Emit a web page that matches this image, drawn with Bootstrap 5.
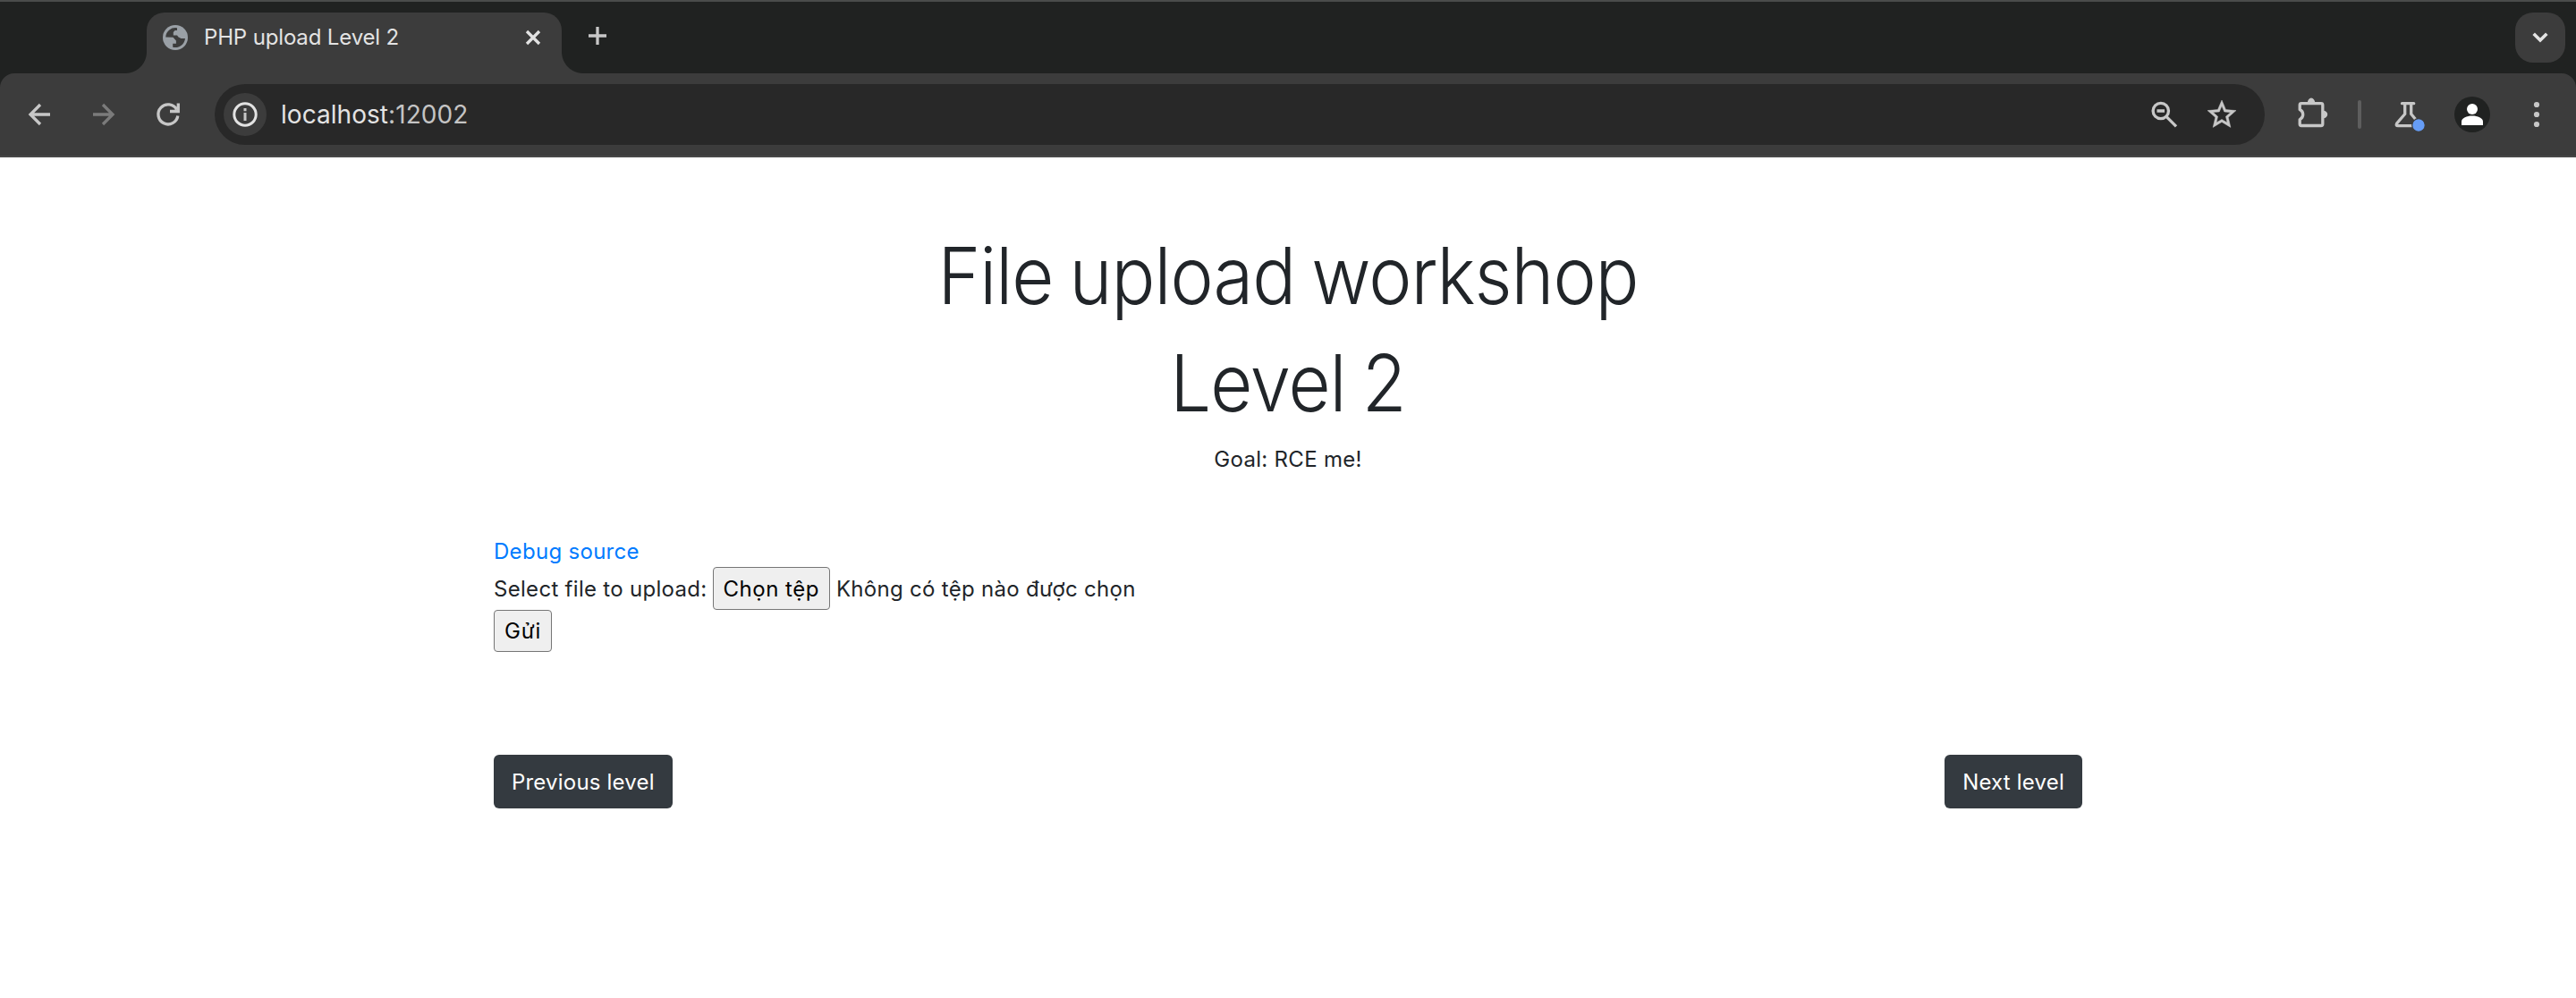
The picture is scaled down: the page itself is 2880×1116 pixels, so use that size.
<!DOCTYPE html>
<html lang="vi">
<head>
<meta charset="utf-8">
<meta name="viewport" content="width=device-width, initial-scale=1">
<title>PHP upload Level 2</title>
<link rel="stylesheet" href="https://cdn.jsdelivr.net/npm/bootstrap@5.3.0/dist/css/bootstrap.min.css">
<style>
body{font-family:Inter,"Liberation Sans",sans-serif;font-size:24px;line-height:36px;letter-spacing:.3px;color:#212529;background:#fff}
svg{display:block;flex:none;fill:none;stroke:#c7c7c7;stroke-width:3.3}
.tabstrip{height:102px;margin-bottom:-20px;padding:12px 12px 0 164px;background:#202221;border-top:2px solid #4a4c4b;letter-spacing:-.15px}
.tab-item{position:relative;width:464px;height:68px;padding:0 20px 12px 14px;background:#3c3c3c;border-radius:20px 20px 0 0;color:#e3e3e3}
.tab-item::before,.tab-item::after{content:"";position:absolute;bottom:0;width:24px;height:24px}
.tab-item::before{right:100%;background:radial-gradient(circle at 0 0,transparent 23.5px,#3c3c3c 24.5px)}
.tab-item::after{left:100%;background:radial-gradient(circle at 100% 0,transparent 23.5px,#3c3c3c 24.5px)}
.tab-title{margin-left:14px;line-height:32px}
.new-tab{margin:0 0 0 12px}
.tab-search{width:56px;height:56px;border-radius:20px;background:#3c3c3c}
.toolbar{position:relative;height:94px;padding:12px 20px 0 8px;background:#3c3c3c;border-radius:16px 16px 0 0;border-bottom:2px solid #474747}
.omnibox{height:68px;margin-left:16px;padding:0 16px 0 10px;border-radius:34px;background:#282828;color:#e3e3e3;font-size:28px;letter-spacing:.05px}
.site-info{width:48px;height:48px;border-radius:50%;background:#3c3c3c}
.port{color:#c4c4c4}
.extensions{margin-left:20px}
.divider{width:4px;height:32px;margin:0 20px;border-radius:2px;background:#5e5e5e}
.profile{margin:0 28px 0 20px}
.page{width:1776px;padding-top:78px}
.page h1{font-size:88px;font-weight:350;line-height:108px;margin-bottom:12px;letter-spacing:-1.1px;word-spacing:-4px;transform:scaleX(.925)}
.page a.source{color:#007bff}
.goal{padding-top:2px}
.form-block{margin-top:67px}
.native-btn{height:48px;padding:1px 11px 0;border:1.5px solid #767676;border-radius:4px;background:#efefef;color:#000;line-height:36px;letter-spacing:.5px}
.native-btn.send{height:47px;letter-spacing:.8px}
.file-row{height:48px;margin-top:-1px}
.file-row span{padding-top:1px}
.file-pick{margin:0 7px 0 6px}
.levels{margin-top:115px}
.level-btn{height:60px;padding:1px 20px 0;border:0;border-radius:6px;background:#343a40;color:#fff;font-size:24px;line-height:60px;letter-spacing:.2px}
.level-btn:hover{background:#23272b;color:#fff}
</style>
</head>
<body>
<header>
  <div class="tabstrip d-flex align-items-start">
    <div class="tab-item d-flex align-items-center">
      <svg width="36" height="36" viewBox="178 24 36 36"><circle cx="196" cy="42" r="14" fill="#9aa0a6" stroke="none"/><path d="M185.2 41.5A11 11 0 0 1 198 31.2V34H195.6L193.8 36V39.5H198L199.500 41.500 202.500 43H207A11 11 0 0 1 193.2 52.700V48.800H196.900V45.500L193.5 41.8Z" fill="#3c3c3c" stroke="none"/></svg>
      <span class="tab-title">PHP upload Level 2</span>
      <svg class="ms-auto" width="24" height="24" viewBox="584 30 24 24"><path d="M589 35l14 14M603 35l-14 14" stroke="#e3e3e3"/></svg>
    </div>
    <svg class="new-tab" width="56" height="56" viewBox="640 14 56 56"><path d="M658 40h20M668 30v20"/></svg>
    <div class="tab-search ms-auto"><svg width="56" height="56" viewBox="2812 14 56 56"><path d="M2832.700 37.700l7.300 7.300 7.300-7.300" stroke="#e3e3e3" stroke-width="3.600"/></svg></div>
  </div>
  <nav class="toolbar d-flex align-items-start">
    <div class="d-flex align-items-center w-100">
      <svg width="72" height="48" viewBox="8 104 72 48"><path d="M56 128H35M45 117 34 128l11 11"/></svg>
      <svg width="72" height="48" viewBox="80 104 72 48"><path d="M104 128h21M115 117l11 11-11 11" stroke="#7b7b7b"/></svg>
      <svg width="72" height="48" viewBox="152 104 72 48"><path d="M198.800 129.500A11 11 0 1 1 197.500 122.500M190 124.500h9.300V115.500"/></svg>
      <div class="omnibox d-flex align-items-center flex-grow-1">
        <div class="site-info"><svg width="48" height="48" viewBox="250 104 48 48"><circle cx="274" cy="128" r="12.200" stroke="#e3e3e3" stroke-width="3"/><path d="M274 126v9M274 121v3.200" stroke="#c7c7c7" stroke-width="3"/></svg></div>
        <span class="ms-3">localhost<span class="port">:12002</span></span>
        <svg class="ms-auto" width="64" height="48" viewBox="2388 104 64 48"><circle cx="2415.800" cy="124" r="8.700"/><path d="M2411.500 124h8.500M2422 130.300l11 11"/></svg>
        <svg width="64" height="48" viewBox="2452 104 64 48"><path transform="translate(2464.800 108.800) scale(1.6)" fill="#c7c7c7" stroke="#c7c7c7" stroke-width=".3" fill-rule="evenodd" d="M22 9.240l-7.190-.620L12 2 9.190 8.630 2 9.240l5.460 4.730L5.820 21 12 17.270 18.180 21l-1.630-7.030L22 9.240zM12 15.400l-3.760 2.270 1-4.280-3.320-2.880 4.380-.380L12 6.100l1.710 4.040 4.380.380-3.320 2.880 1 4.280L12 15.400z"/></svg>
      </div>
      <svg class="extensions" width="64" height="48" viewBox="2552 104 64 48"><path d="M2571.200 122.500V117.500Q2571.200 115.700 2573 115.700H2595Q2596.800 115.700 2596.800 117.500V138.700Q2596.800 140.500 2595 140.500H2573Q2571.200 140.500 2571.200 138.700V133.700A6.200 6.200 0 0 0 2571.200 122.500Z" stroke-linejoin="round"/><path d="M2579.800 115a4.200 5.500 0 0 1 8.400 0zM2597.500 123.800a4.700 4.200 0 0 1 0 8.400z" fill="#c7c7c7" stroke="none"/></svg>
      <div class="divider"></div>
      <svg width="64" height="48" viewBox="2660 104 64 48"><path d="M2685.500 115.700h13.200" stroke-linecap="round"/><path d="M2688.700 116v11.500l-9 10.500q-1.500 2.700 1.300 2.700h17M2695.700 116v11.500l5 6"/><circle cx="2704" cy="140" r="7.300" fill="#669df6" stroke="#3c3c3c" stroke-width="1.200"/></svg>
      <svg class="profile" width="40" height="40" viewBox="2744 108 40 40"><g stroke="none" fill="#fff"><circle cx="2764" cy="128" r="20" fill="#202221"/><circle cx="2764" cy="122" r="6"/><path d="M2752 140v-4c0-4 6-6.500 12-6.500s12 2.500 12 6.500v4z"/></g></svg>
      <svg width="48" height="48" viewBox="2812 104 48 48"><g fill="#c7c7c7" stroke="none"><circle cx="2836" cy="117" r="3.100"/><circle cx="2836" cy="128" r="3.100"/><circle cx="2836" cy="139" r="3.100"/></g></svg>
    </div>
  </nav>
</header>
<main class="page mx-auto">
  <div class="text-center">
    <h1>File upload workshop</h1>
    <h1>Level 2</h1>
    <p class="goal mb-0">Goal: RCE me!</p>
  </div>
  <div class="form-block">
    <a class="source text-decoration-none d-block" href="#">Debug source</a>
    <form>
      <div class="file-row d-flex align-items-center">
        <span>Select file to upload:</span>
        <button type="button" class="native-btn file-pick">Chọn tệp</button>
        <span>Không có tệp nào được chọn</span>
      </div>
      <button type="button" class="native-btn send d-block">Gửi</button>
    </form>
  </div>
  <div class="levels d-flex justify-content-between">
    <a class="btn level-btn" href="#">Previous level</a>
    <a class="btn level-btn" href="#">Next level</a>
  </div>
</main>
<script src="https://cdn.jsdelivr.net/npm/bootstrap@5.3.0/dist/js/bootstrap.bundle.min.js"></script>
</body>
</html>
